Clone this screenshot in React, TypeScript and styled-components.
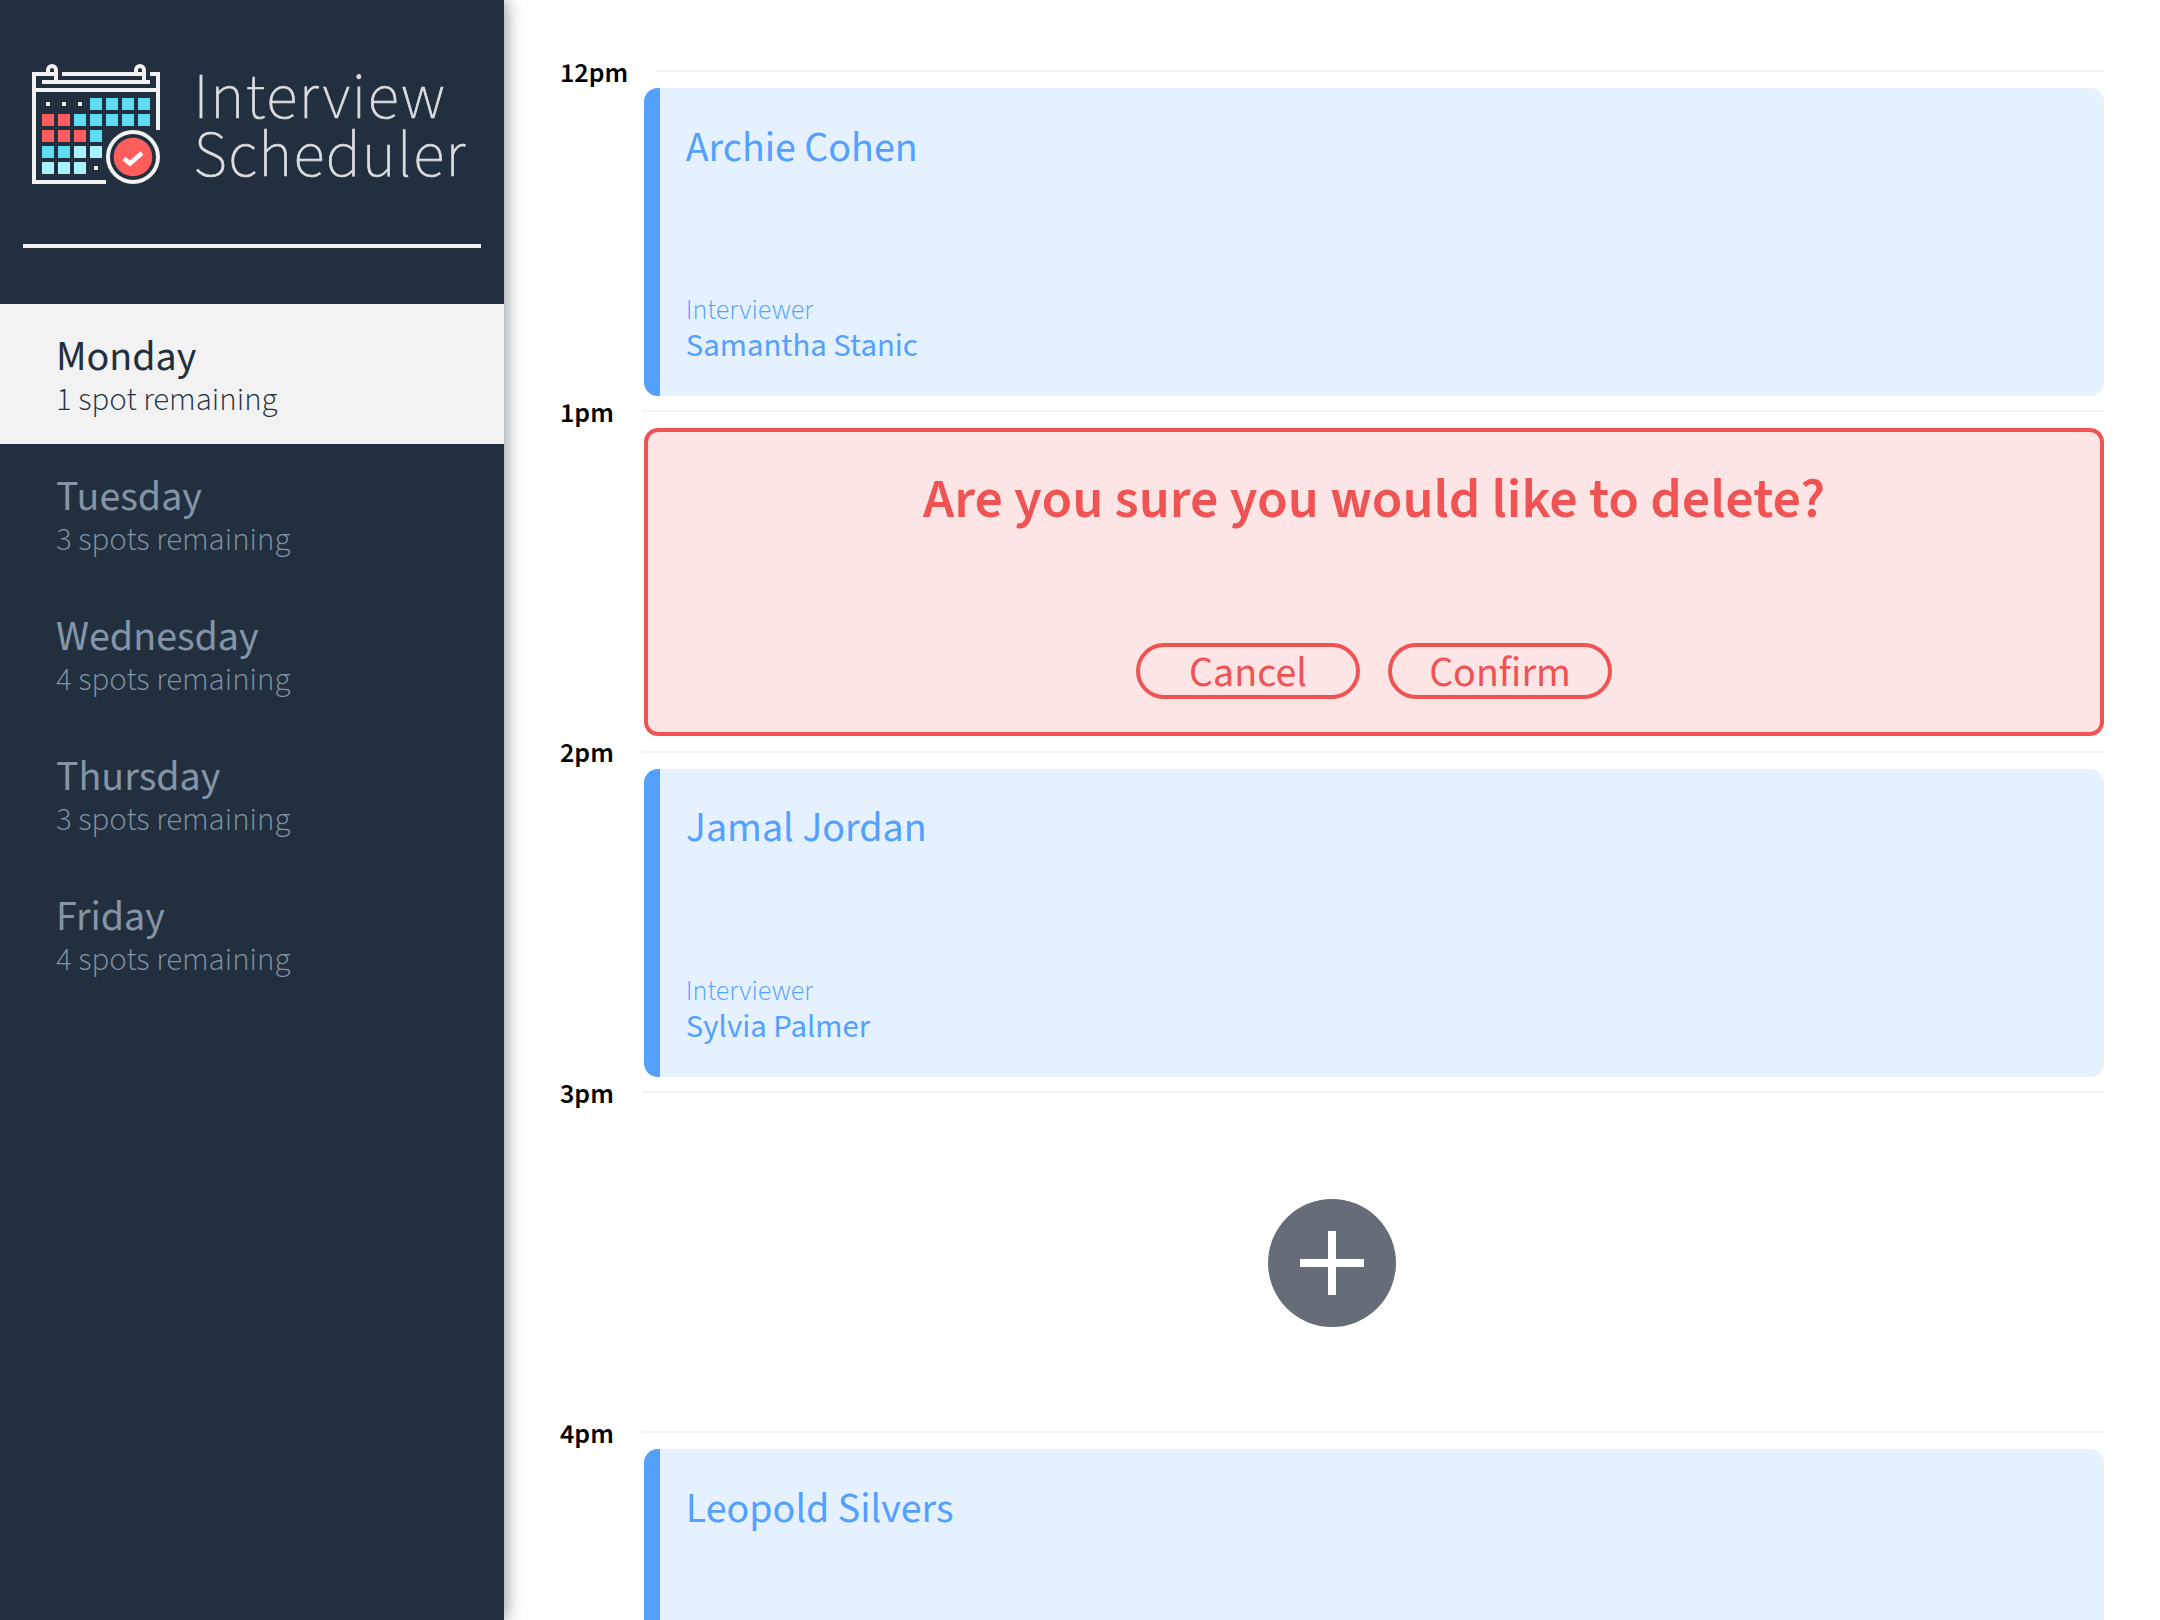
import React from 'react';
import styled, { createGlobalStyle } from 'styled-components';

const color = {
  navy: '#222f3e',
  slate: '#8395a7',
  offWhite: '#f2f2f2',
  blue: '#54a0ff',
  paleBlue: '#e5f1ff',
  red: '#f05354',
  paleRed: '#fde5e5',
  grey: '#666d78',
};

const GlobalStyle = createGlobalStyle`
  *, *::before, *::after { box-sizing: border-box; }
  body {
    margin: 0;
    background: #fff;
    font-family: "Source Sans 3", "Source Sans Pro", "Noto Sans CJK JP", "Noto Sans", sans-serif;
    font-size: 28px;
  }
  h1, h2, h3, h4, p, ul { margin: 0; padding: 0; }
`;

const Layout = styled.main`
  display: flex;
  width: 2160px;
  height: 1620px;
  overflow: hidden;
`;

const Sidebar = styled.section`
  flex: 0 0 504px;
  background: ${color.navy};
  box-shadow: 2px 0 16px rgba(34, 47, 62, 0.5);
`;

const Brand = styled.header`
  display: flex;
  align-items: flex-start;
  height: 244px;
  padding: 62px 0 0 32px;
`;

const BrandName = styled.div`
  margin: 7px 0 0 33.5px;
  font-size: 64.5px;
  font-weight: 200;
  line-height: 58px;
  color: #dcdee0;
  -webkit-text-stroke: 0.7px #dcdee0;
`;

const BrandWord = styled.div<{ $tracking: string }>`
  letter-spacing: ${(p) => p.$tracking};
`;

const Divider = styled.hr`
  width: 458px;
  height: 4px;
  margin: 0 23px;
  border: 0;
  background: ${color.offWhite};
`;

const DayList = styled.ul`
  margin-top: 56px;
  list-style: none;
`;

const DayItem = styled.li<{ $selected?: boolean }>`
  height: 140px;
  padding: 26.5px 56px 0;
  background: ${(p) => (p.$selected ? color.offWhite : 'transparent')};
  color: ${(p) => (p.$selected ? color.navy : color.slate)};
`;

const DayName = styled.h2`
  font-size: 42px;
  font-weight: 400;
  line-height: 52.8px;
`;

const DaySpots = styled.h3`
  font-size: 32.76px;
  font-weight: 300;
  line-height: 33px;
`;

const Schedule = styled.section`
  flex: 1;
  min-width: 0;
  padding: 55.75px 56px 0;
`;

const Slot = styled.article`
  display: grid;
  grid-template-rows: 32.25px 308px;
`;

const SlotHeader = styled.header`
  display: flex;
  align-items: flex-start;
  gap: 28px;
  min-height: 0;
`;

const SlotTime = styled.h4`
  font-size: 28px;
  font-weight: 600;
  line-height: 35px;
  color: #000;
`;

const SlotRule = styled.hr`
  flex: 1;
  height: 2px;
  margin: 14.25px 0 0;
  border: 0;
  background: ${color.offWhite};
`;

const Booking = styled.div`
  display: flex;
  flex-direction: column;
  justify-content: space-between;
  margin-left: 84px;
  padding: 33.5px 28px 29.6px 25.8px;
  border-left: 16px solid ${color.blue};
  border-radius: 14px;
  background: ${color.paleBlue};
  color: ${color.blue};
`;

const Student = styled.h2`
  font-size: 42px;
  font-weight: 400;
  line-height: 52.8px;
`;

const InterviewerLabel = styled.h4`
  font-size: 28px;
  font-weight: 300;
  line-height: 30px;
`;

const InterviewerName = styled.h3`
  font-size: 32.76px;
  font-weight: 400;
  line-height: 41.2px;
`;

const ConfirmCard = styled.div`
  display: flex;
  flex-direction: column;
  align-items: center;
  justify-content: space-between;
  margin-left: 84px;
  padding: 33px 28px 33.5px;
  border: 4px solid ${color.red};
  border-radius: 14px;
  background: ${color.paleRed};
  color: ${color.red};
`;

const ConfirmTitle = styled.h1`
  font-size: 56px;
  font-weight: 600;
  line-height: 70px;
`;

const Actions = styled.div`
  display: flex;
  gap: 28px;
`;

const DangerButton = styled.button`
  display: flex;
  align-items: flex-start;
  justify-content: center;
  width: 224px;
  height: 56px;
  padding: 0;
  border: 4px solid ${color.red};
  border-radius: 28px;
  background: transparent;
  color: ${color.red};
  font-family: inherit;
  font-size: 42px;
  font-weight: 400;
  line-height: 53px;
`;

const Vacancy = styled.div`
  display: flex;
  align-items: center;
  justify-content: center;
`;

const CYAN = '#5bdcf2';
const RED = '#ff5e5c';
const ICE = '#aaf1fb';

const CELLS: (string | null)[][] = [
  [null, null, null, CYAN, CYAN, CYAN, CYAN],
  [RED, RED, CYAN, CYAN, CYAN, CYAN, CYAN],
  [RED, RED, RED, CYAN],
  [CYAN, CYAN, ICE, ICE],
  [ICE, ICE, ICE, null],
];

function CalendarIcon() {
  return (
    <svg width="128" height="122" viewBox="0 0 128 122" fill="none">
      <g stroke={color.offWhite} strokeWidth="4">
        <path d="M74 120H2V12H24M16 12V8a4 4 0 0 1 8 0V20" />
        <path d="M30 12H112M104 12V8a4 4 0 0 1 8 0V20" />
        <path d="M118 12H126V68M10 20H118M2 28H126" />
        <circle cx="101" cy="95" r="25" />
      </g>
      {CELLS.map((row, r) =>
        row.map((fill, c) =>
          fill ? (
            <rect key={`${r}-${c}`} x={10 + c * 16} y={36 + r * 16} width="12" height="12" fill={fill} />
          ) : (
            <rect key={`${r}-${c}`} x={14 + c * 16} y={40 + r * 16} width="4" height="4" fill={color.offWhite} />
          ),
        ),
      )}
      <circle cx="101" cy="95" r="19.3" fill={RED} />
      <path d="M92 96.5L98 101.5L110 91" stroke="#fff" strokeWidth="4.4" />
    </svg>
  );
}

function AddIcon() {
  return (
    <svg width="128" height="128" viewBox="0 0 128 128">
      <circle cx="64" cy="64" r="64" fill={color.grey} />
      <path d="M64 32V96M32 64H96" stroke="#fff" strokeWidth="8" />
    </svg>
  );
}

const days = [
  { name: 'Monday', spots: 1 },
  { name: 'Tuesday', spots: 3 },
  { name: 'Wednesday', spots: 4 },
  { name: 'Thursday', spots: 3 },
  { name: 'Friday', spots: 4 },
];

type Appointment =
  | { time: string; kind: 'booked'; student: string; interviewer: string }
  | { time: string; kind: 'confirm' }
  | { time: string; kind: 'empty' };

const appointments: Appointment[] = [
  { time: '12pm', kind: 'booked', student: 'Archie Cohen', interviewer: 'Samantha Stanic' },
  { time: '1pm', kind: 'confirm' },
  { time: '2pm', kind: 'booked', student: 'Jamal Jordan', interviewer: 'Sylvia Palmer' },
  { time: '3pm', kind: 'empty' },
  { time: '4pm', kind: 'booked', student: 'Leopold Silvers', interviewer: '' },
];

function SlotBody({ slot }: { slot: Appointment }) {
  if (slot.kind === 'booked') {
    return (
      <Booking>
        <Student>{slot.student}</Student>
        {slot.interviewer && (
          <div>
            <InterviewerLabel>Interviewer</InterviewerLabel>
            <InterviewerName>{slot.interviewer}</InterviewerName>
          </div>
        )}
      </Booking>
    );
  }
  if (slot.kind === 'confirm') {
    return (
      <ConfirmCard>
        <ConfirmTitle>Are you sure you would like to delete?</ConfirmTitle>
        <Actions>
          <DangerButton>Cancel</DangerButton>
          <DangerButton>Confirm</DangerButton>
        </Actions>
      </ConfirmCard>
    );
  }
  return (
    <Vacancy>
      <AddIcon />
    </Vacancy>
  );
}

export default function App() {
  return (
    <>
      <GlobalStyle />
      <Layout>
        <Sidebar>
          <Brand>
            <CalendarIcon />
            <BrandName>
              <BrandWord $tracking="1.7px">Interview</BrandWord>
              <BrandWord $tracking="1.4px">Scheduler</BrandWord>
            </BrandName>
          </Brand>
          <Divider />
          <DayList>
            {days.map((day) => (
              <DayItem key={day.name} $selected={day.name === 'Monday'}>
                <DayName>{day.name}</DayName>
                <DaySpots>
                  {`${day.spots} ${day.spots === 1 ? 'spot' : 'spots'} remaining`}
                </DaySpots>
              </DayItem>
            ))}
          </DayList>
        </Sidebar>
        <Schedule>
          {appointments.map((slot) => (
            <Slot key={slot.time}>
              <SlotHeader>
                <SlotTime>{slot.time}</SlotTime>
                <SlotRule />
              </SlotHeader>
              <SlotBody slot={slot} />
            </Slot>
          ))}
        </Schedule>
      </Layout>
    </>
  );
}
